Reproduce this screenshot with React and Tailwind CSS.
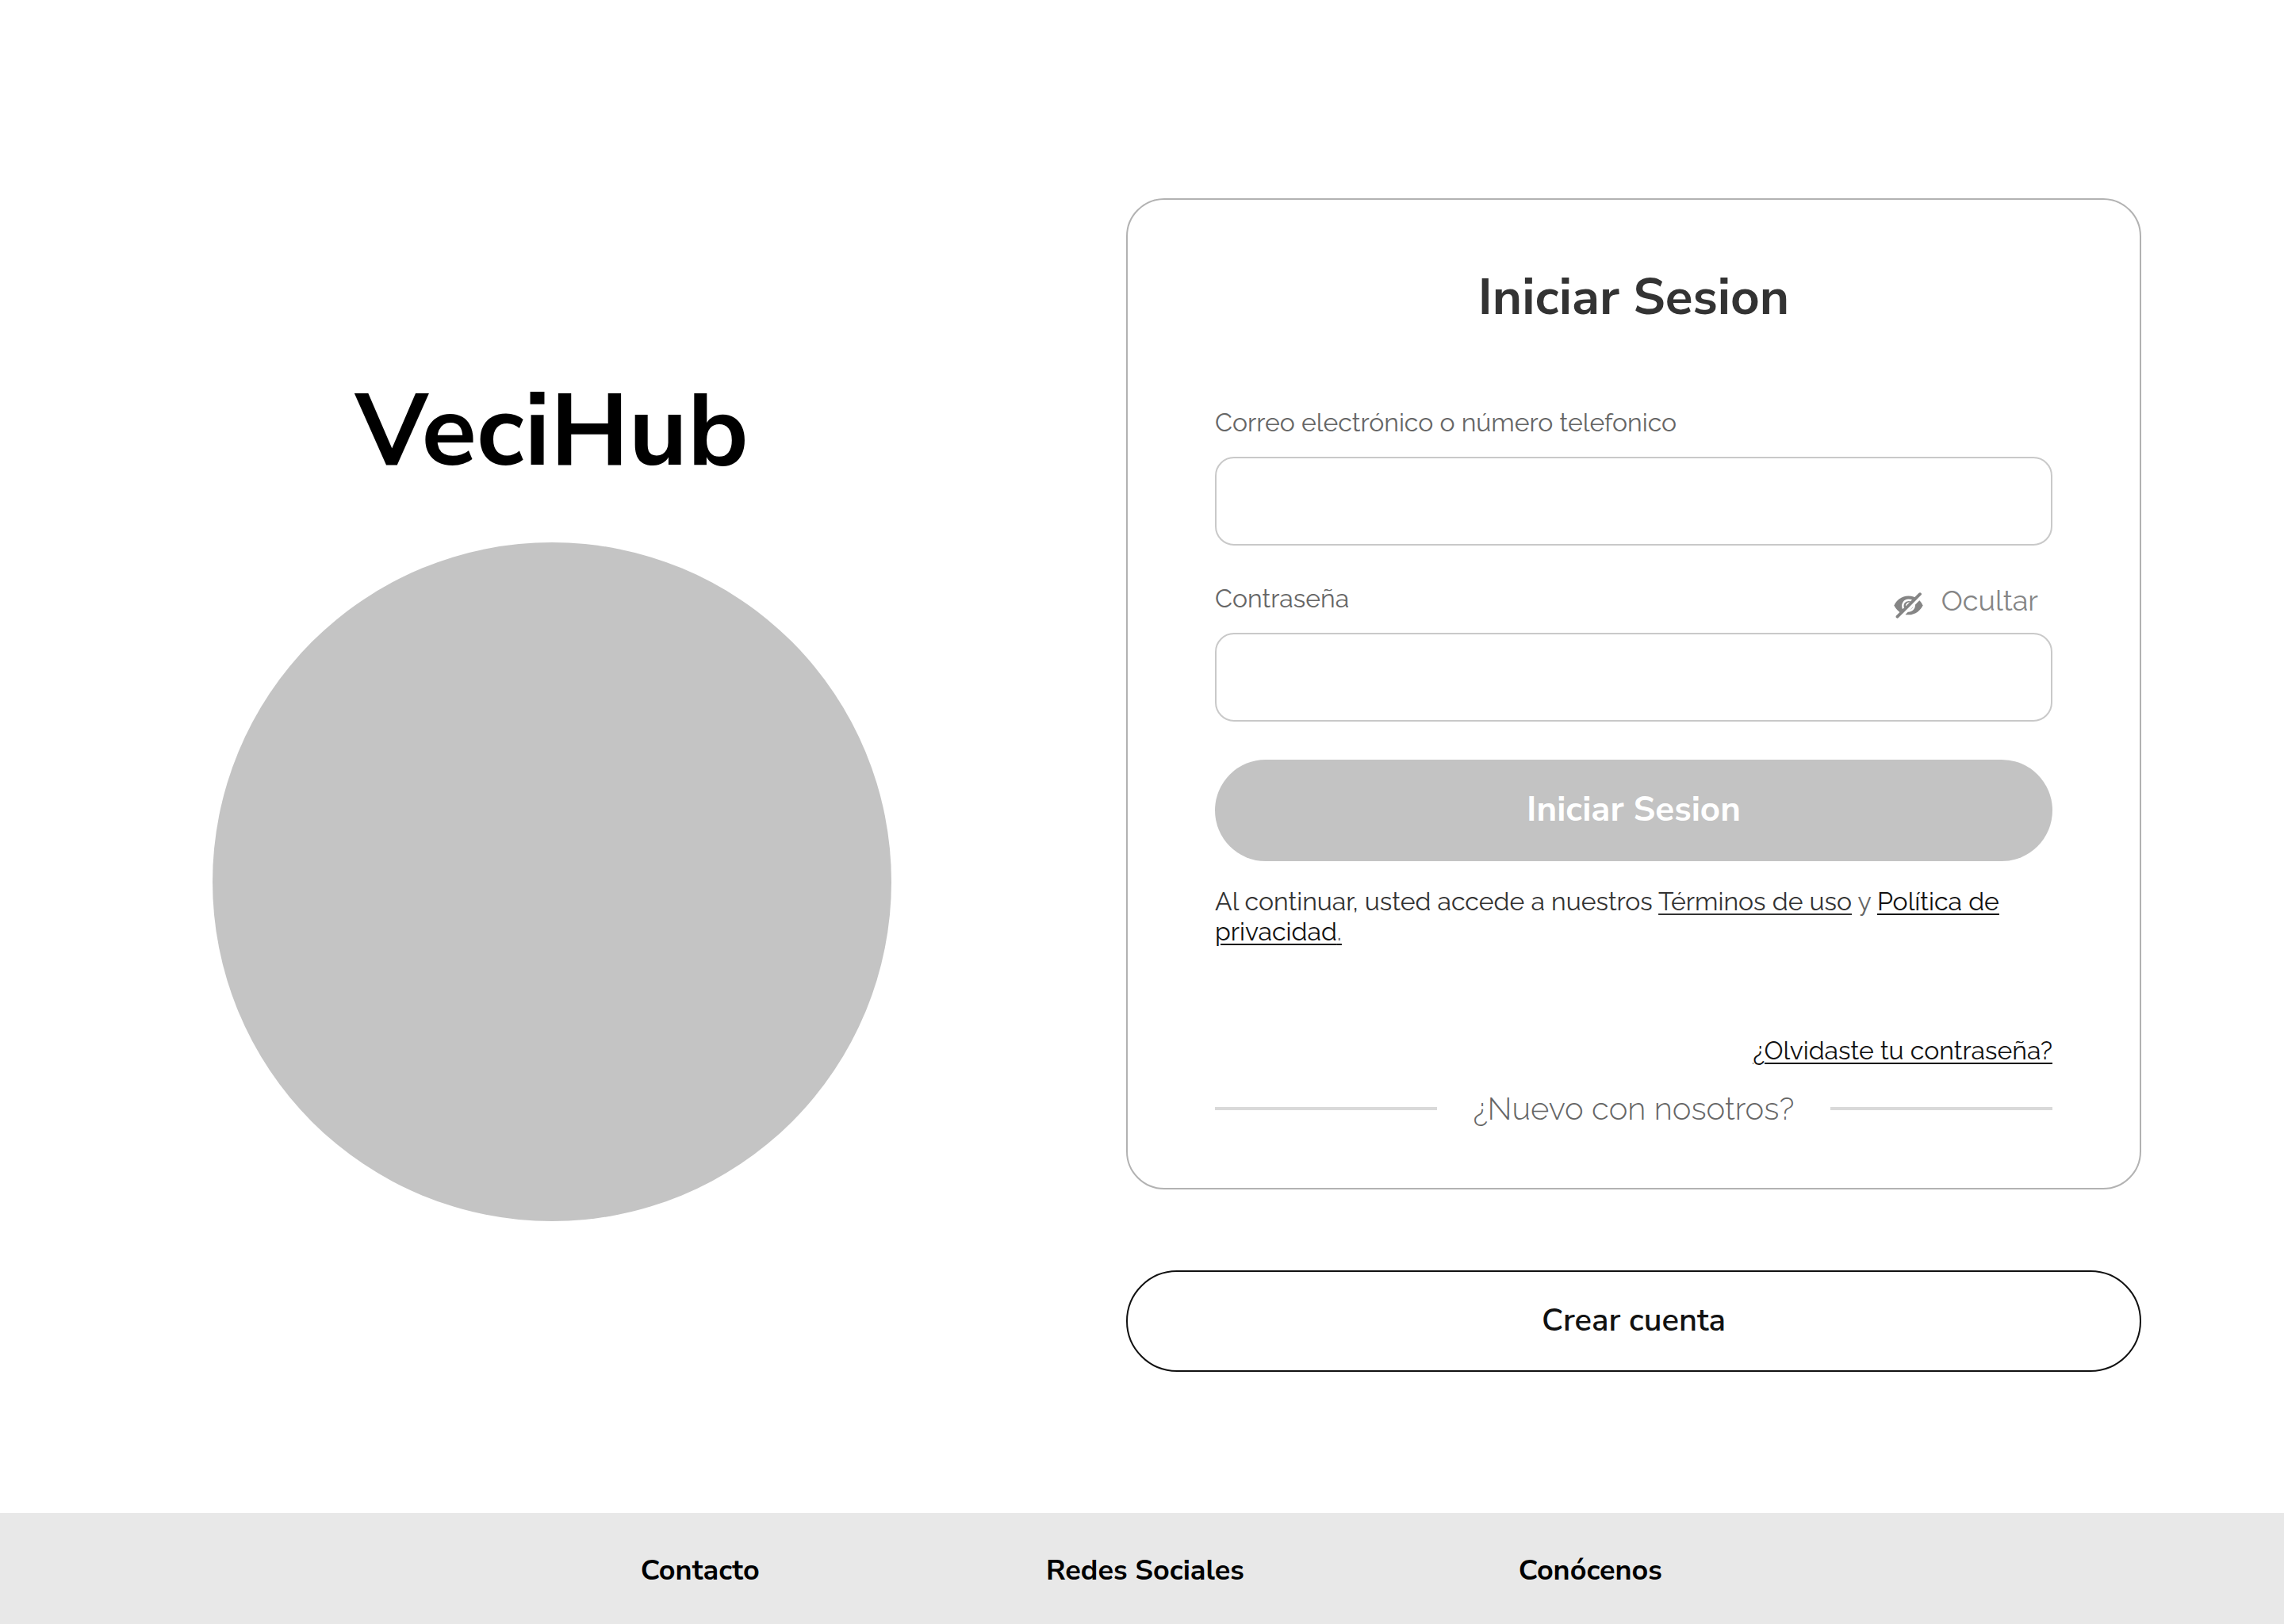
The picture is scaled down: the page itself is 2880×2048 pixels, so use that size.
import { useState } from "react";

const display = "font-['Nunito_Sans','Nunito','Lato',sans-serif]";
const field =
  "h-28 w-full rounded-3xl border-2 border-[#c9c9c9] bg-transparent px-8 text-[32px] text-[#111] outline-none";
const inlineLink = "underline decoration-2 underline-offset-4";

function EyeSlashIcon({ className }) {
  return (
    <svg viewBox="0 0 38 34" className={className} fill="currentColor" aria-hidden="true">
      <path d="M18.500 4.500C27.500 4.500 34 10.500 36.600 16.400C34 22.300 27.500 28.300 18.500 28.300C9.500 28.300 3 22.300 .4 16.400C3 10.500 9.500 4.500 18.500 4.500Z" />
      <path
        d="M12 20.500C9.800 14.500 13.500 9.700 18.500 9.700C20 9.700 21.500 10 22.500 10.600M25.500 13.500C27 19 23.500 23.200 18 23.500"
        fill="none"
        stroke="#fff"
        strokeWidth="2.400"
      />
      <path d="M16.200 17.500C16 15 17.500 13.800 20 13.800" fill="none" stroke="#fff" strokeWidth="2.400" />
      <path d="M7 33L36 4" stroke="#fff" strokeWidth="3.600" />
      <path d="M4.500 30.700L33 2.200" stroke="currentColor" strokeWidth="3.800" strokeLinecap="round" />
    </svg>
  );
}

function Brand() {
  return (
    <section className="flex w-[856px] flex-col items-center gap-[52px]">
      <h1 className={`${display} text-[128px] leading-[176px] font-bold text-black`}>VeciHub</h1>
      <div className="aspect-square w-full rounded-full bg-[#c4c4c4]" />
    </section>
  );
}

function LoginForm() {
  const [hidden, setHidden] = useState(true);
  return (
    <form
      onSubmit={(e) => e.preventDefault()}
      className="flex flex-col rounded-[48px] border-2 border-[#b2b2b2] px-[110px] pt-20 pb-[76px]"
    >
      <h2 className={`${display} text-center text-[64px] leading-[86px] font-bold text-[#333]`}>
        Iniciar Sesion
      </h2>

      <label htmlFor="user" className="mt-24 mb-6 self-start text-[32px] leading-[38px] text-[#666]">
        Correo electrónico o número telefonico
      </label>
      <input id="user" type="text" className={field} />

      <div className="mt-12 mb-6 flex items-center justify-between">
        <label htmlFor="password" className="text-[32px] leading-[38px] text-[#666]">
          Contraseña
        </label>
        <button
          type="button"
          onClick={() => setHidden(!hidden)}
          className="flex h-[38px] items-center gap-[22px] pr-[18px] text-[36px] leading-[42px] text-[#858585]"
        >
          <EyeSlashIcon className="mt-[18px] h-[34px] w-[38px]" />
          <span className="mt-1">Ocultar</span>
        </button>
      </div>
      <input id="password" type={hidden ? "password" : "text"} className={field} />

      <button
        type="submit"
        className={`${display} mt-12 h-32 rounded-full bg-[#c3c3c3] pb-0.5 text-[44px] leading-[60px] font-bold text-white`}
      >
        Iniciar Sesion
      </button>

      <p className="mt-8 text-[32px] leading-[38px] text-[#333]">
        Al continuar, usted accede a nuestros{" "}
        <a href="#terminos" className={inlineLink}>Términos de uso</a>
        <span className="text-[#666]"> y </span>
        <a href="#privacidad" className={`${inlineLink} text-[#111]`}>
          Política de privacidad<span className="text-[#666]">.</span>
        </a>
      </p>

      <a
        href="#recuperar"
        className={`${inlineLink} mt-28 self-end text-[32px] leading-[38px] text-[#111]`}
      >
        ¿Olvidaste tu contraseña?
      </a>

      <div className="mt-[30px] flex items-center gap-[46px]">
        <span className="h-1 flex-1 bg-[#666]/25" />
        <p className="text-[40px] leading-[48px] font-light text-[#666]">¿Nuevo con nosotros?</p>
        <span className="h-1 flex-1 bg-[#666]/25" />
      </div>
    </form>
  );
}

export default function App() {
  return (
    <div className="flex min-h-screen flex-col bg-white font-['Raleway','Lato',sans-serif] font-normal">
      <main className="flex flex-1 items-start justify-between pt-[250px] pr-[180px] pb-[178px] pl-[268px]">
        <div className="pt-[206px]">
          <Brand />
        </div>
        <div className="flex w-[1280px] flex-col gap-[102px]">
          <LoginForm />
          <button
            type="button"
            className={`${display} h-32 rounded-full border-2 border-[#111] pb-0.5 text-[40px] leading-[56px] font-semibold text-[#111]`}
          >
            Crear cuenta
          </button>
        </div>
      </main>

      <footer className="bg-[#e8e8e8]">
        <nav
          className={`${display} mx-auto grid h-[140px] w-full max-w-[1692px] grid-cols-3 items-center justify-items-center pt-1.5 pl-2 text-[36px] leading-[50px] font-bold text-black`}
        >
          <a href="#contacto">Contacto</a>
          <a href="#redes">Redes Sociales</a>
          <a href="#conocenos">Conócenos</a>
        </nav>
      </footer>
    </div>
  );
}
